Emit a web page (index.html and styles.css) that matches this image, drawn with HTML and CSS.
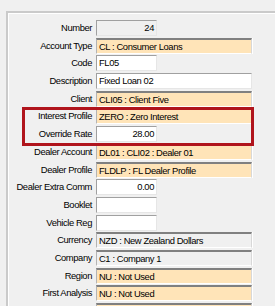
FILE: index.html
```html
<!DOCTYPE html>
<html>
<head>
<meta charset="utf-8">
<link rel="stylesheet" href="styles.css">
</head>
<body>
<div class="panel">
  <div class="form">
    <div class="label">Number</div><div class="field short disabled num">24</div>
    <div class="label">Account Type</div><div class="field wide lookup">CL : Consumer Loans</div>
    <div class="label">Code</div><div class="field short">FL05</div>
    <div class="label">Description</div><div class="field wide">Fixed Loan 02</div>
    <div class="label">Client</div><div class="field wide lookup">CLI05 : Client Five</div>
    <div class="label">Interest Profile</div><div class="field wide lookup">ZERO : Zero Interest</div>
    <div class="label">Override Rate</div><div class="field short num">28.00</div>
    <div class="label">Dealer Account</div><div class="field wide lookup">DL01 : CLI02 : Dealer 01</div>
    <div class="label">Dealer Profile</div><div class="field wide lookup">FLDLP : FL Dealer Profile</div>
    <div class="label">Dealer Extra Comm</div><div class="field short num">0.00</div>
    <div class="label">Booklet</div><div class="field short"></div>
    <div class="label">Vehicle Reg</div><div class="field short"></div>
    <div class="label">Currency</div><div class="field wide lookup grey">NZD : New Zealand Dollars</div>
    <div class="label">Company</div><div class="field wide lookup grey">C1 : Company 1</div>
    <div class="label">Region</div><div class="field wide lookup">NU : Not Used</div>
    <div class="label">First Analysis</div><div class="field wide lookup">NU : Not Used</div>
    <div class="label"></div><div class="field wide lookup"></div>
  </div>
  <div class="highlight"></div>
</div>
</body>
</html>
```
FILE: styles.css
```css
html, body {
  margin: 0;
  padding: 0;
  background: #f0f0f0;
  overflow: hidden;
  width: 275px;
  height: 306px;
}
body {
  font-family: "Liberation Sans", Arial, sans-serif;
  font-size: 9.4px;
  letter-spacing: -0.4px;
  color: #000;
  position: relative;
}
.panel {
  margin: 11px 0 0 6px;
  border-top: 2px solid #cacaca;
  border-left: 2px solid #cacaca;
  box-shadow: inset 1px 1px 0 #ffffff;
  height: 400px;
  padding: 7px 0 0 0;
}
.form {
  display: grid;
  grid-template-columns: 84px 1fr;
  column-gap: 4px;
  grid-auto-rows: 17.7px;
  align-items: start;
}
.label {
  text-align: right;
  line-height: 16px;
  height: 16px;
  white-space: nowrap;
}
.field {
  box-sizing: border-box;
  height: 16px;
  line-height: 14px;
  padding: 0 2px;
  background: #ffffff;
  border-top: 1px solid #a0a0a0;
  border-left: 1px solid #a0a0a0;
  border-right: 1px solid #e6e6e6;
  border-bottom: 1px solid #e6e6e6;
  white-space: nowrap;
  overflow: hidden;
}
.short { width: 61px; }
.wide { width: 156px; }
.num { text-align: right; }
.disabled { background: #f0f0f0; }
.lookup {
  background: #ffe4b8;
  border-top: 2px solid #808080;
  border-left: 1px solid #b4b4b4;
  border-right: 1px solid #d8d8d8;
  border-bottom: 1px solid #ffffff;
  box-shadow: 1px 0 0 #ffffff;
  line-height: 13px;
}
.lookup.grey { background: #f0f0f0; }
.highlight {
  position: absolute;
  left: 22px;
  top: 107px;
  width: 232px;
  height: 39px;
  box-sizing: border-box;
  border: 3px solid #b0141c;
}
```
